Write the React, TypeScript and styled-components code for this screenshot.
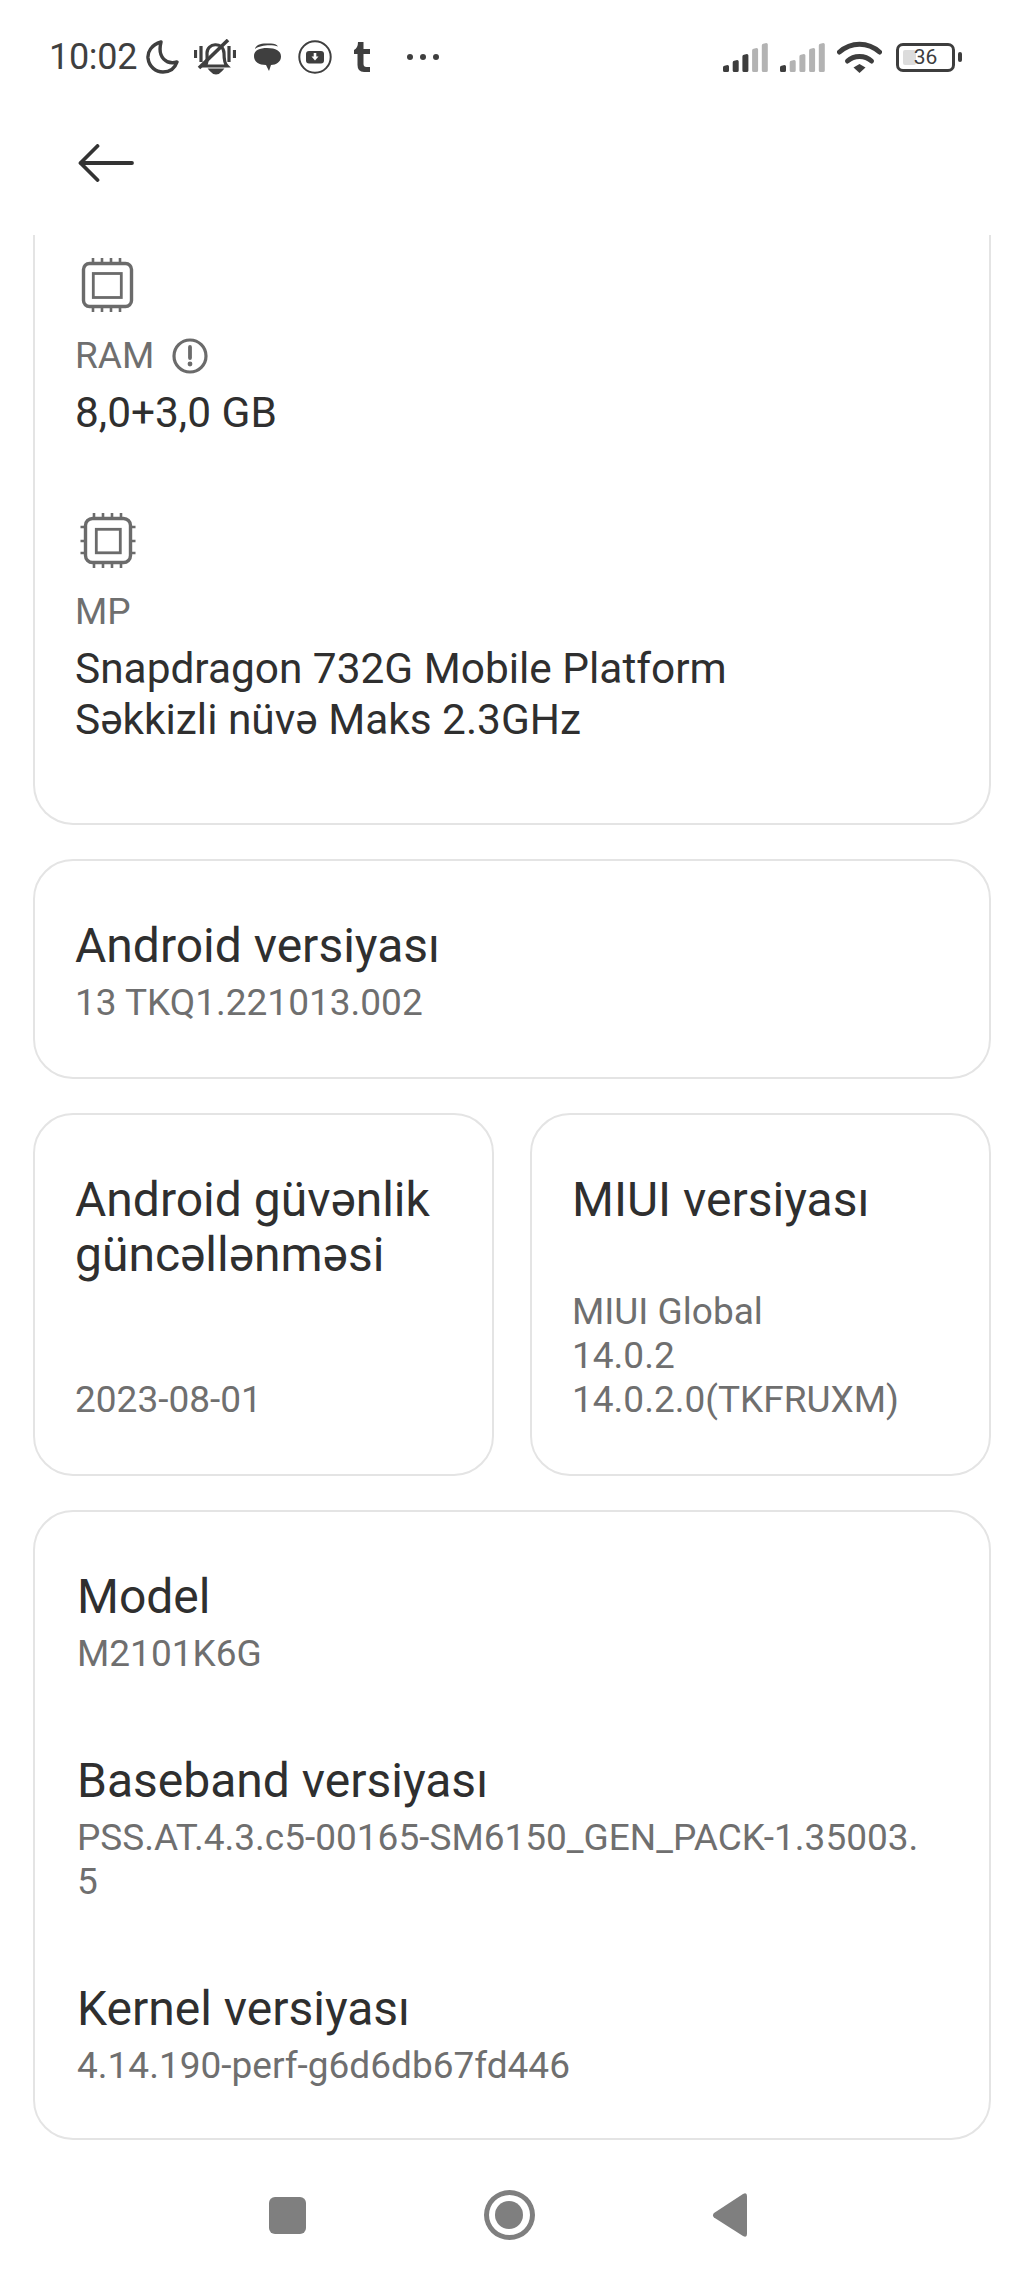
import React from 'react';
import styled, { createGlobalStyle } from 'styled-components';

const GlobalStyle = createGlobalStyle`
  * { box-sizing: border-box; }
  html, body { margin: 0; padding: 0; background: #fff; }
  body { font-family: Roboto, "Liberation Sans", sans-serif; }
`;

const SignalBars: React.FC<{ active: number }> = ({ active }) => {
  const heights = [7, 12, 18, 24, 29];
  return (
    <svg width="46" height="30" viewBox="0 0 46 30">
      {heights.map((h, i) => {
        const x = i * 9.7;
        const top = 30 - h;
        return (
          <path
            key={i}
            d={`M${x} 28.5 V${top + 2.5} Q${x} ${top + 1} ${x + 1.5} ${top + 0.8} L${x + 4.5} ${top} Q${x + 6} ${top} ${x + 6} ${top + 1.5} V28.5 Q${x + 6} 30 ${x + 4.5} 30 H${x + 1.5} Q${x} 30 ${x} 28.5 Z`}
            fill={i < active ? '#3d3d3d' : '#b3b3b3'}
          />
        );
      })}
    </svg>
  );
};

const RamIcon: React.FC = () => (
  <svg width="66" height="58" viewBox="0 0 66 58" fill="none" stroke="#6b6b6b">
    <rect x="8.5" y="7.5" width="48" height="43" rx="6" strokeWidth="3.4" />
    <rect x="18.3" y="17.5" width="28" height="24" strokeWidth="2.8" />
    {[18, 27, 36, 45].map((x) => (
      <path key={x} d={`M${x} 2 V6 M${x} 52 V56`} strokeWidth="2.6" />
    ))}
  </svg>
);

const SocIcon: React.FC = () => (
  <svg width="66" height="58" viewBox="0 0 66 58" fill="none" stroke="#6b6b6b">
    <rect x="10.5" y="6.5" width="45" height="44" rx="7" strokeWidth="3.4" />
    <rect x="21.3" y="17.3" width="24" height="23.5" strokeWidth="2.8" />
    {[19, 28, 37, 46].map((x) => (
      <path key={x} d={`M${x} 1 V5 M${x} 52 V56`} strokeWidth="2.6" />
    ))}
    {[15, 29, 41].map((y) => (
      <path key={y} d={`M5.5 ${y} H9 M57 ${y} H60.5`} strokeWidth="2.6" />
    ))}
  </svg>
);

const App: React.FC = () => {
  return (
    <Screen>
      <GlobalStyle />
      <StatusBar>
        <StatusLeft>
          <Time>10:02</Time>
          <IconSlot $gap={9}>
            <svg width="33" height="34" viewBox="0 0 33 34" fill="none" stroke="#3f3f3f" strokeWidth="3.4">
              <path d="M15 2 C5 5 1.5 12 2 18 C3 27 10 32 17 32 C24 32 29 28 31 22 C21 25 11 18 15 2 Z" strokeLinejoin="round" />
            </svg>
          </IconSlot>
          <IconSlot $gap={15}>
            <svg width="42" height="36" viewBox="0 0 42 36" fill="none" stroke="#3f3f3f" strokeWidth="3.2">
              <path d="M1.5 11 V19 M7 7 V23 M35 7 V23 M40.5 11 V19" />
              <path d="M11 27 C14 24 13 18 13 14 C13 4 29 2 30 14 C30 18 30 24 33 27 H11 Z" />
              <path d="M5 29 L34 1" strokeWidth="3.6" />
              <path d="M17 31 H27 Q22 37 17 31 Z" fill="#3f3f3f" />
            </svg>
          </IconSlot>
          <IconSlot $gap={18}>
            <svg width="27" height="28" viewBox="0 0 27 28">
              <path d="M1 6 C2 2 6 0.5 12 0.5 H17 C20 0.5 23 1.5 24 3.5 C18 1.5 6 2 1 6 Z" fill="#3f3f3f" />
              <path d="M0 13 C0 7 6 5 13 5 C22 5 27 8 27 13.5 C27 19 22 22 17 22 L15 28 L12 22 C5 22 0 19 0 13 Z" fill="#3f3f3f" />
            </svg>
          </IconSlot>
          <IconSlot $gap={17}>
            <svg width="34" height="34" viewBox="0 0 34 34">
              <circle cx="17" cy="17" r="15.7" fill="none" stroke="#3f3f3f" strokeWidth="2" />
              <rect x="8" y="11" width="18" height="12.5" rx="3" fill="#3f3f3f" />
              <path d="M15.7 13 H18.3 V16.5 H20.5 L17 20.5 L13.5 16.5 H15.7 Z" fill="#fff" />
            </svg>
          </IconSlot>
          <IconSlot $gap={22}>
            <svg width="17" height="30" viewBox="0 0 17 30">
              <path d="M4 0 H9.5 V7 H16 V12 H9.5 V22 Q9.5 25 12.5 25 H16 V30 H10 Q3.5 30 3.5 23 V12 H0 V8 Q4 6 4 0 Z" fill="#3f3f3f" />
            </svg>
          </IconSlot>
          <IconSlot $gap={35}>
            <svg width="34" height="8" viewBox="0 0 34 8" fill="#3f3f3f">
              <circle cx="4" cy="4" r="3" />
              <circle cx="17" cy="4" r="3" />
              <circle cx="30" cy="4" r="3" />
            </svg>
          </IconSlot>
        </StatusLeft>
        <StatusRight>
          <SignalBars active={3} />
          <IconSlot $gap={11}>
            <SignalBars active={1} />
          </IconSlot>
          <IconSlot $gap={11}>
            <svg width="45" height="32" viewBox="0 0 45 32" fill="none" stroke="#3d3d3d" strokeWidth="5" strokeLinecap="round">
              <path d="M2.5 11 C14 0.5 31 0.5 42.500 11" />
              <path d="M10.5 20 C17 14 28 14 34.500 20" />
              <path d="M16.5 26.5 L22.5 23 L28.5 26.5 L22.5 32 Z" fill="#3d3d3d" stroke="none" />
            </svg>
          </IconSlot>
          <Battery>
            <BatteryFill />
            <BatteryLevel>36</BatteryLevel>
          </Battery>
          <BatteryNub />
        </StatusRight>
      </StatusBar>

      <Header>
        <svg width="56" height="38" viewBox="0 0 56 38" fill="none" stroke="#333" strokeWidth="3.8" strokeLinecap="round" strokeLinejoin="round">
          <path d="M54 19 H2.5 M19.500 2 L2.5 19 L19.500 36" />
        </svg>
      </Header>

      <Content>
        <SpecCard>
          <SpecBlock>
            <RamIcon />
            <SpecLabel>
              RAM
              <svg width="36" height="36" viewBox="0 0 36 36">
                <circle cx="18" cy="18" r="16" fill="none" stroke="#6b6b6b" strokeWidth="3.2" />
                <path d="M18 9 V20" stroke="#6b6b6b" strokeWidth="3.8" strokeLinecap="round" />
                <circle cx="18" cy="26" r="2.4" fill="#6b6b6b" />
              </svg>
            </SpecLabel>
            <SpecValue>8,0+3,0 GB</SpecValue>
          </SpecBlock>
          <SpecBlock>
            <SocIcon />
            <SpecLabel>MP</SpecLabel>
            <SpecValue>
              Snapdragon 732G Mobile Platform
              <br />
              Səkkizli nüvə Maks 2.3GHz
            </SpecValue>
          </SpecBlock>
        </SpecCard>

        <VersionCard>
          <Title>Android versiyası</Title>
          <Sub>13 TKQ1.221013.002</Sub>
        </VersionCard>

        <TwoColumns>
          <TallCard>
            <Title>
              Android güvənlik
              <br />
              güncəllənməsi
            </Title>
            <Sub>2023-08-01</Sub>
          </TallCard>
          <TallCard>
            <Title>MIUI versiyası</Title>
            <Sub>
              MIUI Global
              <br />
              14.0.2
              <br />
              14.0.2.0(TKFRUXM)
            </Sub>
          </TallCard>
        </TwoColumns>

        <ListCard>
          <ListItem>
            <Title>Model</Title>
            <Sub>M2101K6G</Sub>
          </ListItem>
          <ListItem>
            <Title>Baseband versiyası</Title>
            <Sub>
              PSS.AT.4.3.c5-00165-SM6150_GEN_PACK-1.35003.
              <br />5
            </Sub>
          </ListItem>
          <ListItem>
            <Title>Kernel versiyası</Title>
            <Sub>4.14.190-perf-g6d6db67fd446</Sub>
          </ListItem>
        </ListCard>
      </Content>

      <NavBar>
        <NavSquare />
        <NavHome>
          <NavDot />
        </NavHome>
        <svg width="35" height="44" viewBox="0 0 35 44">
          <path d="M31 1 Q35 -1 35 3 V41 Q35 45 31 43 L2 24.5 Q0 22 2 20 Z" fill="#7f7f7f" />
        </svg>
      </NavBar>
    </Screen>
  );
};

const Screen = styled.div`
  width: 1024px;
  height: 2276px;
  overflow: hidden;
  display: flex;
  flex-direction: column;
  background: #fff;
`;

const StatusBar = styled.div`
  height: 115px;
  padding: 40px 62px 0 49px;
  display: flex;
  justify-content: space-between;
  align-items: flex-start;
`;

const StatusLeft = styled.div`
  display: flex;
  align-items: center;
  height: 34px;
`;

const StatusRight = styled.div`
  display: flex;
  align-items: center;
  height: 34px;
`;

const Time = styled.span`
  font-size: 36px;
  line-height: 34px;
  color: #3f3f3f;
  letter-spacing: -0.3px;
`;

const IconSlot = styled.span<{ $gap: number }>`
  display: flex;
  margin-left: ${(p) => p.$gap}px;
`;

const Battery = styled.div`
  position: relative;
  margin-left: 14px;
  width: 59px;
  height: 29px;
  border: 3px solid #3d3d3d;
  border-radius: 7px;
  display: flex;
  align-items: center;
  justify-content: center;
`;

const BatteryFill = styled.div`
  position: absolute;
  left: 4px;
  top: 4px;
  bottom: 4px;
  width: 13px;
  background: #dcdcdc;
  border-radius: 2px;
`;

const BatteryLevel = styled.span`
  position: relative;
  font-size: 21px;
  color: #3d3d3d;
`;

const BatteryNub = styled.div`
  margin-left: 3px;
  width: 4px;
  height: 10px;
  background: #3d3d3d;
  border-radius: 2px;
`;

const Header = styled.div`
  height: 120px;
  padding: 29px 0 0 78px;
`;

const Content = styled.div`
  flex: 1;
  display: flex;
  flex-direction: column;
  gap: 34px;
  padding: 0 33px;
`;

const Card = styled.div`
  background: #fff;
  border: 2px solid #e4e4e4;
  border-radius: 40px;
`;

const SpecCard = styled(Card)`
  height: 590px;
  padding: 21px 40px 0;
  border-top: none;
  border-top-left-radius: 0;
  border-top-right-radius: 0;
  display: flex;
  flex-direction: column;
  gap: 74px;
`;

const SpecBlock = styled.div`
  display: flex;
  flex-direction: column;
  align-items: flex-start;
`;

const SpecLabel = styled.div`
  display: flex;
  align-items: center;
  gap: 18px;
  margin-top: 20px;
  font-size: 37px;
  line-height: 44px;
  color: #6f6f6f;
`;

const SpecValue = styled.div`
  margin-top: 9px;
  font-size: 42.4px;
  line-height: 51px;
  color: #2f2f2f;
`;

const Title = styled.div`
  font-size: 48px;
  line-height: 55px;
  color: #2f2f2f;
`;

const Sub = styled.div`
  margin-top: 8px;
  font-size: 37px;
  line-height: 44px;
  color: #6f6f6f;
`;

const VersionCard = styled(Card)`
  height: 220px;
  padding: 57px 40px 0;
`;

const TwoColumns = styled.div`
  display: grid;
  grid-template-columns: 1fr 1fr;
  gap: 36px;
`;

const TallCard = styled(Card)`
  height: 363px;
  padding: 57px 40px 52px;
  display: flex;
  flex-direction: column;
  justify-content: space-between;
`;

const ListCard = styled(Card)`
  height: 630px;
  padding: 57px 40px 0 42px;
  display: flex;
  flex-direction: column;
  gap: 77px;
`;

const ListItem = styled.div`
  display: flex;
  flex-direction: column;
`;

const NavBar = styled.div`
  flex: 1;
  padding: 14px 277px 0 269px;
  display: flex;
  align-items: center;
  justify-content: space-between;
`;

const NavSquare = styled.div`
  width: 37px;
  height: 37px;
  background: #7f7f7f;
  border-radius: 6px;
`;

const NavHome = styled.div`
  width: 51px;
  height: 50px;
  border: 5px solid #7f7f7f;
  border-radius: 50%;
  display: flex;
  align-items: center;
  justify-content: center;
`;

const NavDot = styled.div`
  width: 28px;
  height: 28px;
  background: #7f7f7f;
  border-radius: 50%;
`;

export default App;
